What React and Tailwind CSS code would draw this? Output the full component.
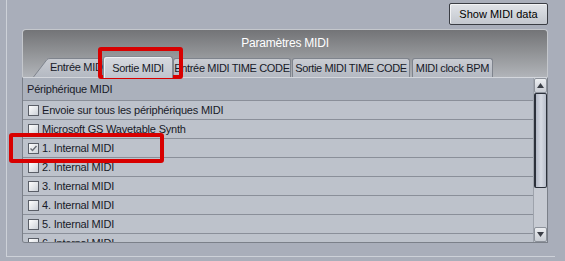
const rows = [
  { label: "Envoie sur tous les périphériques MIDI" },
  { label: "Microsoft GS Wavetable Synth" },
  { label: "1. Internal MIDI", checked: true },
  { label: "2. Internal MIDI" },
  { label: "3. Internal MIDI" },
  { label: "4. Internal MIDI" },
  { label: "5. Internal MIDI" },
  { label: "6. Internal MIDI" },
];

function Checkbox({ checked }) {
  return (
    <div className="w-[11px] h-[11px] shrink-0 border border-[#5a5e67] bg-gradient-to-br from-[#ffffff] to-[#cdd1d8] flex items-center justify-center">
      {checked && (
        <svg width="9" height="9" viewBox="0 0 9 9">
          <path d="M1.5 4.5 L3.5 6.5 L7.5 2" fill="none" stroke="#6b6f77" strokeWidth="1.4" />
        </svg>
      )}
    </div>
  );
}

function Tab({ label, w, selected, first }) {
  if (first) {
    return (
      <div className="relative h-[19px] shrink-0 flex items-center pl-[17px] text-[11px] tracking-[-0.3px] whitespace-nowrap overflow-hidden" style={{ width: w }}>
        <svg className="absolute inset-0" width={w} height="19" viewBox={`0 0 ${w} 19`}>
          <defs>
            <linearGradient id="tg1" x1="0" y1="0" x2="0" y2="1">
              <stop offset="0" stopColor="#c9ccd2" />
              <stop offset="1" stopColor="#b4b9c2" />
            </linearGradient>
          </defs>
          <path d={`M0.5 19 L14 1.5 Q15 0.5 17 0.5 L${w - 2.5} 0.5 Q${w - 0.5} 0.5 ${w - 0.5} 2.5 L${w - 0.5} 19`} fill="url(#tg1)" stroke="#7f848d" />
        </svg>
        <span className="relative">{label}</span>
      </div>
    );
  }
  if (selected) {
    return (
      <div
        className="relative z-10 h-[22px] mb-[-1px] shrink-0 flex items-center justify-center pt-[1px] rounded-t-[3px] border border-b-0 border-[#858a93] bg-gradient-to-b from-[#d6d9df] to-[#c0c5ce] shadow-[inset_1px_1px_0_#eef0f3] text-[11px] tracking-[-0.3px]"
        style={{ width: w }}
      >
        {label}
      </div>
    );
  }
  return (
    <div
      className="h-[19px] shrink-0 flex items-center justify-center rounded-t-[3px] border border-b-0 border-[#7f848d] bg-gradient-to-b from-[#c9ccd2] to-[#b4b9c2] text-[11px] tracking-[-0.35px] whitespace-nowrap"
      style={{ width: w }}
    >
      {label}
    </div>
  );
}

function ScrollBtn({ up }) {
  return (
    <div className="h-[15px] shrink-0 border border-[#8d929b] rounded-[2px] bg-gradient-to-b from-[#eceef1] to-[#c9cdd4] flex items-center justify-center">
      <svg width="7" height="5" viewBox="0 0 7 5">
        {up ? <path d="M3.5 0 L7 5 L0 5 Z" fill="#3a3e46" /> : <path d="M0 0 L7 0 L3.5 5 Z" fill="#3a3e46" />}
      </svg>
    </div>
  );
}

export default function App() {
  return (
    <div className="relative w-[565px] h-[261px] overflow-hidden bg-[#a9aeba] pl-[6px] font-['Liberation_Sans',Arial,sans-serif] text-[#181a28]">
      <div className="w-[549px] h-[257px] border-l border-b border-[#cdd1d8] flex flex-col">
        <div className="flex justify-end pr-[7px] pt-[3px]">
          <button className="w-[99px] h-[22px] border border-[#3a3d44] rounded-[2px] bg-gradient-to-b from-[#e0e3e8] to-[#c3c7ce] shadow-[inset_1px_1px_0_#f2f3f5] text-[11px] text-black leading-none">
            Show MIDI data
          </button>
        </div>
        <div className="ml-[15px] mt-[4px] w-[526px] flex flex-col">
          <div className="rounded-t-[4px] border-t border-x border-[#c4c7cc] bg-gradient-to-b from-[#737477] via-[#929497] to-[#b1b4b9] flex flex-col">
            <div className="h-[25px] flex items-center justify-center text-white text-[12px] tracking-[-0.2px]">
              Paramètres MIDI
            </div>
            <div className="h-[22px] flex items-end pl-[10px]">
              <Tab label="Entrée MIDI" w={70} first />
              <Tab label="Sortie MIDI" w={70} selected />
              <Tab label="Entrée MIDI TIME CODE" w={118} />
              <div className="w-[1px]" />
              <Tab label="Sortie MIDI TIME CODE" w={118} />
              <div className="w-[2px]" />
              <Tab label="MIDI clock BPM" w={81} />
            </div>
          </div>
          <div className="h-[166px] flex border-t border-t-[#d3d6dc] border-l border-b border-r border-[#7b8089] rounded-bl-[3px] overflow-hidden">
            <div className="flex-1 flex flex-col overflow-hidden">
              <div className="h-[23px] shrink-0 border-b border-[#8a8f99] bg-[#abb1bc] flex items-center pl-[4px] text-[11px] tracking-[-0.2px]">
                Périphérique MIDI
              </div>
              {rows.map((r, i) => (
                <div
                  key={i}
                  className="h-[19px] shrink-0 border-b border-[#8a8f99] bg-[#bdc2cb] flex items-center pl-[5px] gap-[3px] text-[11px] tracking-[-0.2px] whitespace-nowrap"
                >
                  <Checkbox checked={r.checked} />
                  <span>{r.label}</span>
                </div>
              ))}
            </div>
            <div className="w-[14px] shrink-0 flex flex-col bg-[#c6cad2] border-l border-[#9ea3ac]">
              <ScrollBtn up />
              <div className="h-[95px] shrink-0 border border-[#2c313b] border-l-2 rounded-[2px] bg-gradient-to-r from-[#b3b9c6] via-[#d6dae3] to-[#b9bfcb]" />
              <div className="flex-1 bg-[#c7cbd3]" />
              <ScrollBtn />
            </div>
          </div>
        </div>
      </div>
      <div className="absolute left-[98px] top-[47px] w-[85px] h-[32px] border-4 border-[#d80000] rounded-[3px]" />
      <div className="absolute left-[9px] top-[133px] w-[155px] h-[30px] border-4 border-[#d80000] rounded-[3px]" />
    </div>
  );
}
